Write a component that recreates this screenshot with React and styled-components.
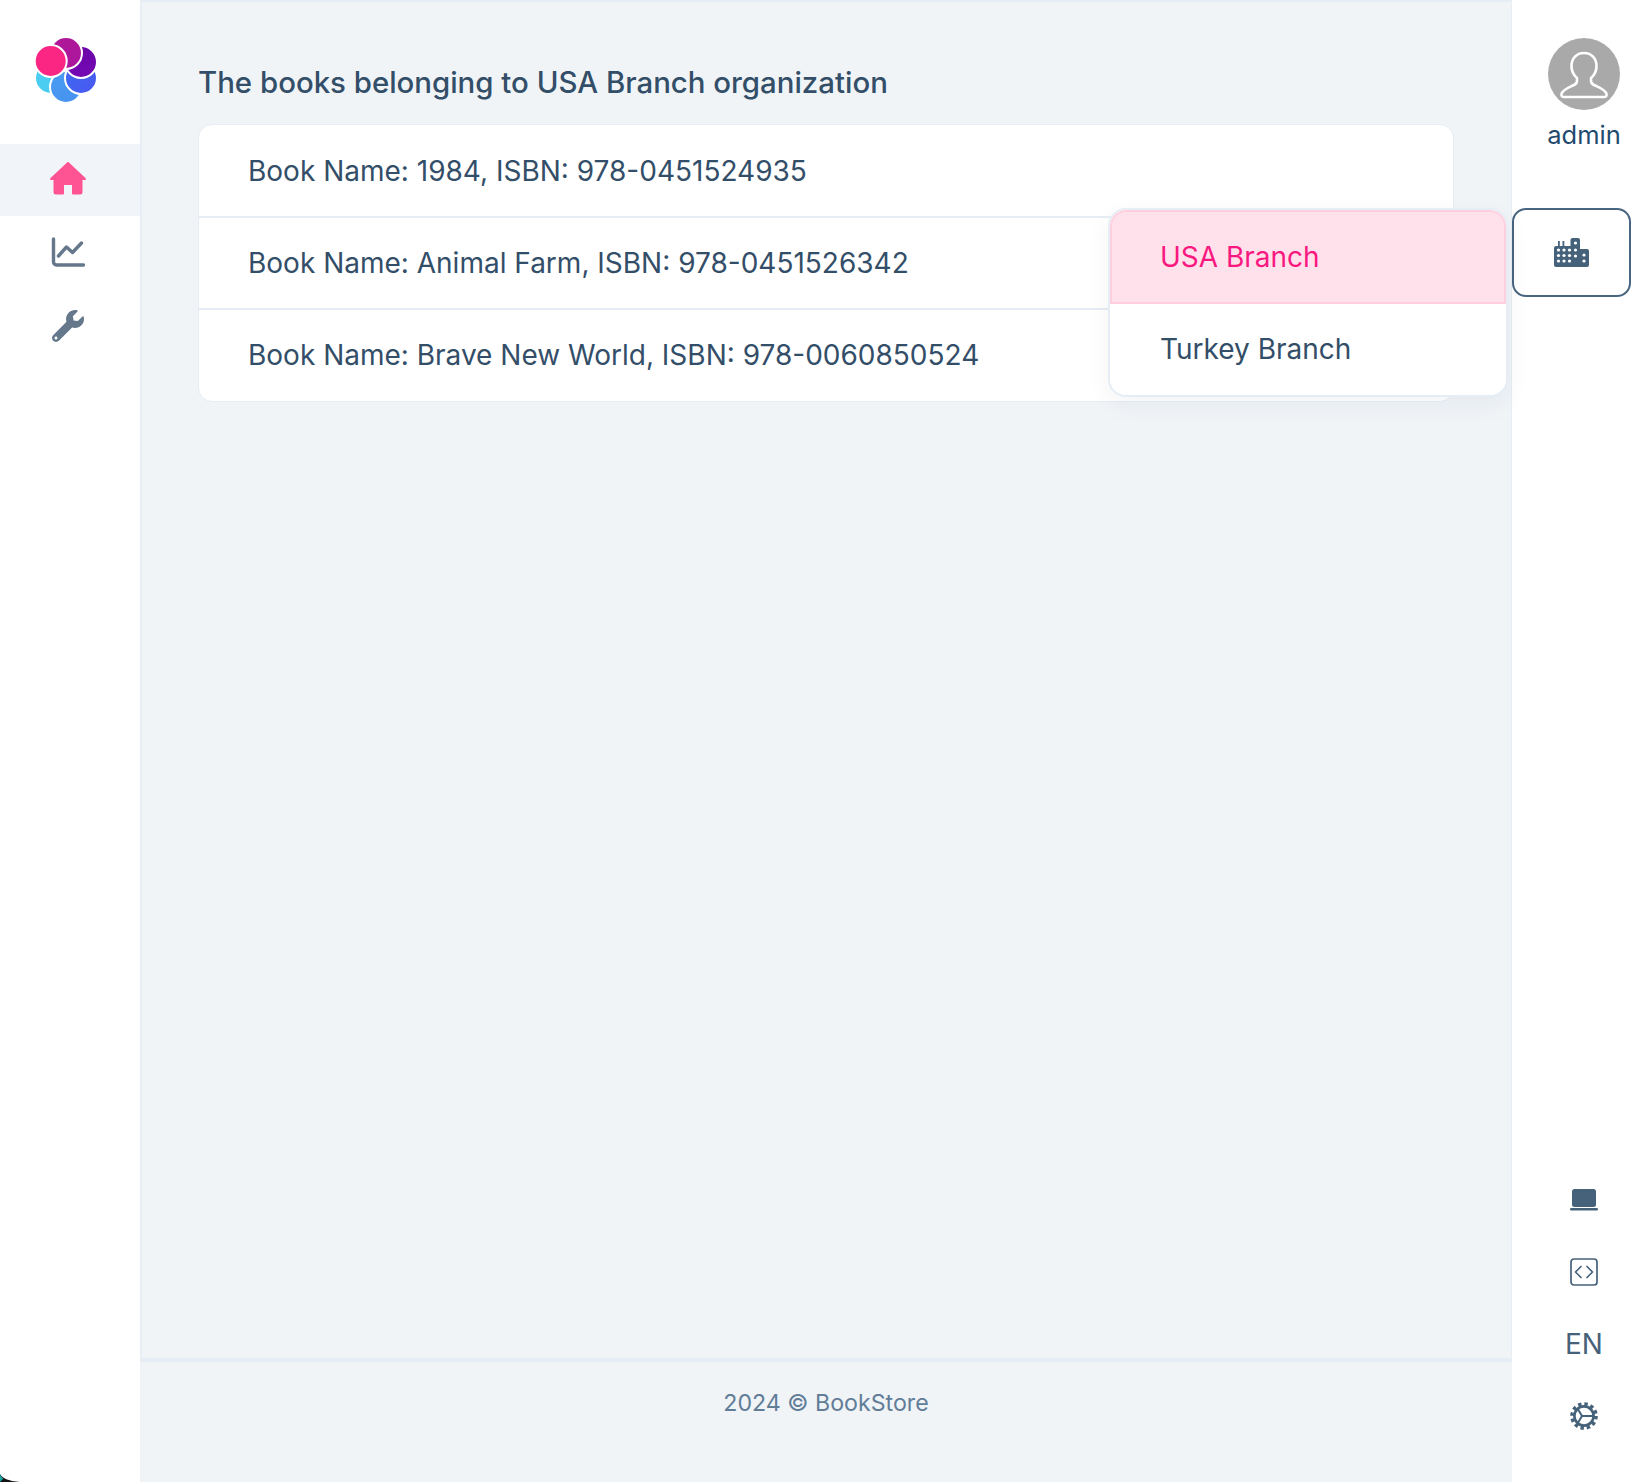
import styled, { createGlobalStyle } from 'styled-components';
import { FaWrench } from 'react-icons/fa';

const GlobalStyle = createGlobalStyle`
  html, body {
    margin: 0;
    padding: 0;
    background: #fff;
    font-family: Inter, "Noto Sans", sans-serif;
    color: #334e68;
  }
  * {
    box-sizing: border-box;
  }
`;

const books = [
  'Book Name: 1984, ISBN: 978-0451524935',
  'Book Name: Animal Farm, ISBN: 978-0451526342',
  'Book Name: Brave New World, ISBN: 978-0060850524',
];

const Logo = () => (
  <svg width="70" height="70" viewBox="0 0 70 70">
    <defs>
      <linearGradient id="magenta" x1="0" y1="0" x2="1" y2="1">
        <stop offset="0" stopColor="#b01a98" />
        <stop offset="1" stopColor="#a9149c" />
      </linearGradient>
      <linearGradient id="violet" x1="0" y1="0" x2="0" y2="1">
        <stop offset="0" stopColor="#6a05a8" />
        <stop offset="1" stopColor="#7609b4" />
      </linearGradient>
      <linearGradient id="royal" x1="0" y1="0" x2="1" y2="1">
        <stop offset="0" stopColor="#3d6cf0" />
        <stop offset="1" stopColor="#4a57f2" />
      </linearGradient>
      <linearGradient id="sky" x1="0" y1="0" x2="1" y2="1">
        <stop offset="0" stopColor="#4a9cf0" />
        <stop offset="1" stopColor="#4690f0" />
      </linearGradient>
    </defs>
    <g stroke="#fff" strokeWidth="2">
      <circle cx="16" cy="41" r="16" fill="#4bcdf2" />
      <circle cx="31" cy="50" r="16" fill="url(#sky)" />
      <circle cx="46" cy="41" r="16" fill="url(#royal)" />
      <circle cx="46" cy="25" r="16" fill="url(#violet)" />
      <circle cx="31" cy="16" r="16" fill="url(#magenta)" />
      <circle cx="15.7" cy="24" r="16" fill="#fb2583" />
    </g>
  </svg>
);

const HomeIcon = () => (
  <svg width="38" height="34" viewBox="0 0 38 34">
    <path
      d="M19 2 L36 18 H32.5 V31 a1.5 1.5 0 0 1 -1.5 1.5 H24 V23 H14 V32.5 H7 a1.5 1.5 0 0 1 -1.5 -1.5 V18 H2 Z"
      fill="#ff5494"
      stroke="#ff5494"
      strokeWidth="2"
      strokeLinejoin="round"
    />
  </svg>
);

const ChartIcon = () => (
  <svg width="34" height="30" viewBox="0 0 34 30" fill="none" stroke="#64778b" strokeWidth="3.4" strokeLinecap="round" strokeLinejoin="round">
    <path d="M2.5 2 V25 a3 3 0 0 0 3 3 H32.5" />
    <path d="M7.5 19 L15.5 10 L21.5 15.5 L30.5 6" />
  </svg>
);

const BuildingIcon = () => (
  <svg width="35" height="30" viewBox="0 0 35 30">
    <path
      d="M0 10 a2 2 0 0 1 2 -2 H4 V3 h1.8 V8 H8.5 V3 h1.8 V8 H16.5 V2 a2 2 0 0 1 2 -2 h5.5 a2 2 0 0 1 2 2 V11 h7 a2 2 0 0 1 2 2 V27 a2 2 0 0 1 -2 2 H2 a2 2 0 0 1 -2 -2 Z"
      fill="#46627a"
    />
    <g fill="#fff">
      {[4.5, 10, 15.5].map((x) =>
        [12, 17.5, 23].map((y) => <circle key={`${x}-${y}`} cx={x} cy={y} r="1.6" />),
      )}
      <circle cx="21.5" cy="5" r="1.6" />
      <circle cx="21.5" cy="12" r="1.6" />
      <circle cx="21.5" cy="18" r="1.6" />
      <circle cx="30" cy="17" r="1.6" />
      <circle cx="30" cy="23" r="1.6" />
    </g>
  </svg>
);

const AvatarFigure = () => (
  <svg width="72" height="72" viewBox="0 0 72 72">
    <circle cx="36" cy="36" r="36" fill="#a9a9a9" />
    <path
      d="M36 15 c-8 0 -12.5 6 -12.5 13 c0 5 2.5 9.5 5.5 12 v3 c0 2 -1 3 -3 4 c-5 2.5 -11.5 4.5 -12.5 9 c-0.4 2 0.5 3 2.5 3 h40 c2 0 2.9 -1 2.5 -3 c-1 -4.5 -7.5 -6.5 -12.5 -9 c-2 -1 -3 -2 -3 -4 v-3 c3 -2.5 5.5 -7 5.5 -12 c0 -7 -4.5 -13 -12.5 -13 Z"
      fill="none"
      stroke="#fff"
      strokeWidth="2.6"
      strokeLinejoin="round"
    />
  </svg>
);

const LaptopIcon = () => (
  <svg width="28" height="22" viewBox="0 0 28 22">
    <rect x="2" y="0" width="24" height="18" rx="2.5" fill="#46627a" />
    <rect x="0" y="19" width="28" height="2.6" rx="1.3" fill="#46627a" />
  </svg>
);

const CodeIcon = () => (
  <svg width="28" height="28" viewBox="0 0 28 28" fill="none" stroke="#46627a" strokeWidth="1.7" strokeLinecap="round" strokeLinejoin="round">
    <rect x="1" y="1" width="26" height="26" rx="3" />
    <path d="M11 8.5 L5.5 14 L11 19.5" />
    <path d="M17 8.5 L22.5 14 L17 19.5" />
  </svg>
);

const GearIcon = () => (
  <svg width="28" height="28" viewBox="0 0 28 28" fill="none" stroke="#46627a">
    <circle cx="14" cy="14" r="12" strokeWidth="3.6" strokeDasharray="3.4 2.88" />
    <circle cx="14" cy="14" r="9.6" strokeWidth="2.6" />
    <path d="M24 14 H12 L7.5 6.5 M12 14 L7.5 21.5" strokeWidth="2" />
  </svg>
);

const CornerMark = () => (
  <Corner width="20" height="8" viewBox="0 0 20 8">
    <path d="M0 0 C2 4 8 7 20 8 H0 Z" fill="#111" />
    <path d="M0 0 C0.6 2 2 3.6 3.4 4.6 L0 8 Z" fill="#1aa6a0" />
  </Corner>
);

const App = () => {
  return (
    <>
      <GlobalStyle />
      <Layout>
        <LeftSidebar>
          <LogoBox>
            <Logo />
          </LogoBox>
          <Nav>
            <NavItem $active>
              <HomeIcon />
            </NavItem>
            <NavItem>
              <ChartIcon />
            </NavItem>
            <NavItem>
              <FaWrench size={32} color="#64778b" />
            </NavItem>
          </Nav>
          <CornerMark />
        </LeftSidebar>

        <Main>
          <Content>
            <Heading>The books belonging to USA Branch organization</Heading>
            <BookCard>
              {books.map((book) => (
                <BookRow key={book}>{book}</BookRow>
              ))}
            </BookCard>
          </Content>
          <Footer>2024 © BookStore</Footer>
        </Main>

        <RightSidebar>
          <Profile>
            <AvatarFigure />
            <UserName>admin</UserName>
          </Profile>
          <OrgWrap>
            <OrgButton>
              <BuildingIcon />
            </OrgButton>
            <OrgMenu>
              <OrgItem $active>USA Branch</OrgItem>
              <OrgItem>Turkey Branch</OrgItem>
            </OrgMenu>
          </OrgWrap>
          <Tools>
            <ToolSlot>
              <LaptopIcon />
            </ToolSlot>
            <ToolSlot>
              <CodeIcon />
            </ToolSlot>
            <ToolSlot>
              <Lang>EN</Lang>
            </ToolSlot>
            <ToolSlot>
              <GearIcon />
            </ToolSlot>
          </Tools>
        </RightSidebar>
      </Layout>
    </>
  );
};

const Layout = styled.div`
  display: grid;
  grid-template-columns: 140px 1fr 136px;
  height: 1482px;
  overflow: hidden;
  background: #fff;
`;

const LeftSidebar = styled.aside`
  position: relative;
  display: flex;
  flex-direction: column;
`;

const Corner = styled.svg`
  position: absolute;
  left: 0;
  bottom: 0;
`;

const LogoBox = styled.div`
  height: 144px;
  padding: 37px 0 0 35px;
`;

const Nav = styled.nav`
  display: flex;
  flex-direction: column;
`;

const NavItem = styled.div`
  display: flex;
  align-items: center;
  justify-content: center;
  height: 72px;
  padding-right: 4px;
  padding-bottom: ${(p) => (p.$active ? '5px' : '0')};
  margin-bottom: ${(p) => (p.$active ? '0' : '2px')};
  background: ${(p) => (p.$active ? '#f1f5f9' : 'transparent')};
`;

const Main = styled.main`
  display: flex;
  flex-direction: column;
  background: #f0f4f7;
`;

const Content = styled.section`
  flex: 1;
  padding: 61px 57px 0 56px;
  border: 2px solid #e7edf4;
  border-right-width: 1px;
`;

const Heading = styled.h1`
  margin: 0 0 21px;
  font-size: 29.4px;
  line-height: 40px;
  font-weight: 500;
  color: #334e68;
`;

const BookCard = styled.div`
  background: #fff;
  border: 1px solid #e7edf4;
  border-radius: 14px;
  overflow: hidden;
`;

const BookRow = styled.div`
  height: 92px;
  padding: 0 49px;
  display: flex;
  align-items: center;
  font-size: 28px;
  color: #334e68;
  border-bottom: 2px solid #e7edf4;

  &:first-child {
    height: 93px;
    padding-top: 1px;
  }

  &:last-child {
    height: 91px;
    padding-bottom: 1px;
    border-bottom: 0;
  }
`;

const Footer = styled.footer`
  height: 122px;
  padding-top: 23px;
  text-align: center;
  font-size: 23.2px;
  line-height: 36px;
  color: #627d98;
  border-top: 2px solid #e7edf4;
`;

const RightSidebar = styled.aside`
  display: flex;
  flex-direction: column;
`;

const Profile = styled.div`
  display: flex;
  flex-direction: column;
  align-items: center;
  padding: 38px 0 0 8px;
  height: 208px;
`;

const UserName = styled.div`
  margin-top: 6px;
  font-size: 25.5px;
  line-height: 38px;
  color: #1f4a6e;
`;

const OrgWrap = styled.div`
  position: relative;
  width: 119px;
`;

const OrgButton = styled.div`
  display: flex;
  align-items: center;
  justify-content: center;
  height: 89px;
  border: 2px solid #486581;
  border-radius: 14px;
  background: #fff;
`;

const OrgMenu = styled.div`
  position: absolute;
  top: 0;
  right: calc(100% + 4px);
  width: 400px;
  background: #fff;
  border: 2px solid #e7edf4;
  border-radius: 18px;
  overflow: hidden;
  box-shadow: 0 8px 24px rgba(15, 40, 80, 0.05);
`;

const OrgItem = styled.div`
  display: flex;
  align-items: center;
  height: ${(p) => (p.$active ? '94px' : '91px')};
  padding-left: ${(p) => (p.$active ? '48px' : '50px')};
  padding-bottom: 1px;
  font-size: 28px;
  color: ${(p) => (p.$active ? '#f91880' : '#334e68')};
  background: ${(p) => (p.$active ? '#ffe1ec' : '#fff')};
  border: ${(p) => (p.$active ? '2px solid #ffcfe0' : '0')};
  border-top-left-radius: ${(p) => (p.$active ? '16px' : '0')};
  border-top-right-radius: ${(p) => (p.$active ? '16px' : '0')};
`;

const Tools = styled.div`
  margin-top: auto;
  padding: 0 0 30px 8px;
  display: flex;
  flex-direction: column;
`;

const ToolSlot = styled.div`
  display: flex;
  align-items: center;
  justify-content: center;
  height: 72px;
`;

const Lang = styled.div`
  font-size: 28px;
  line-height: 28px;
  color: #46627a;
`;

export default App;
